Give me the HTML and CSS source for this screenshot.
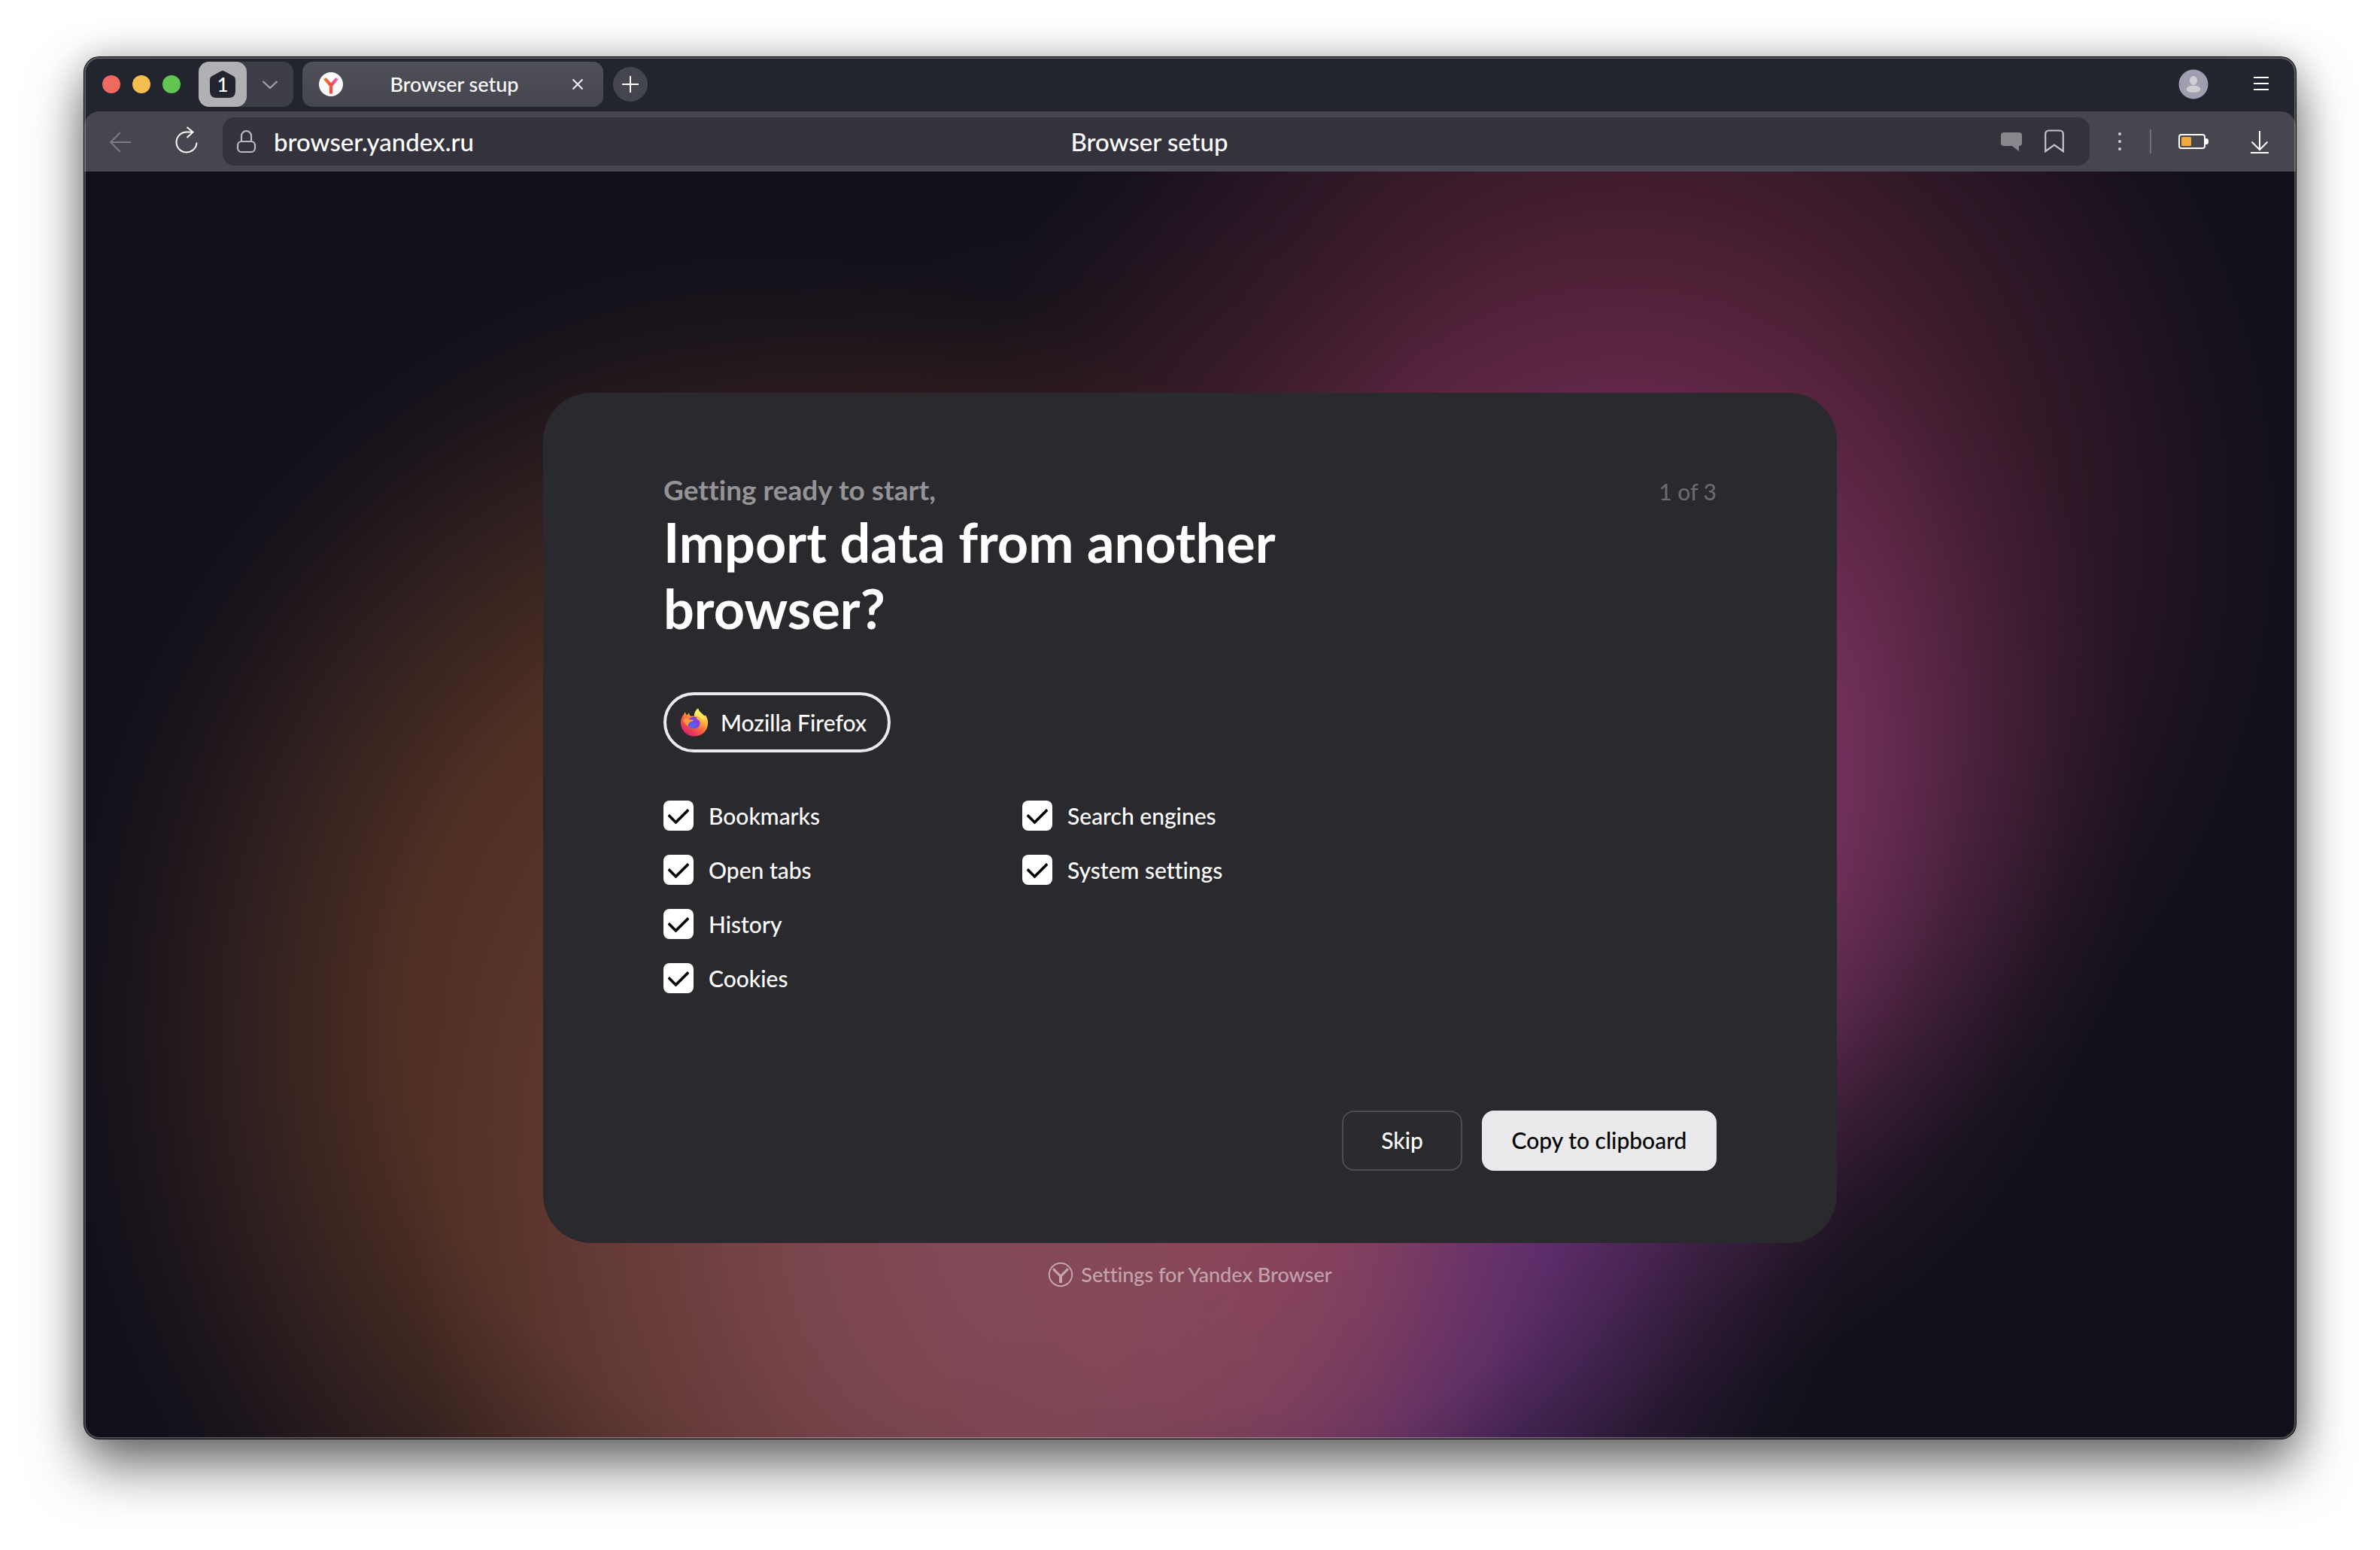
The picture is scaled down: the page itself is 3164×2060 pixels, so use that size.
FILE: index.html
```html
<!DOCTYPE html>
<html lang="en">
<head>
<meta charset="utf-8">
<title>Browser setup</title>
<link rel="stylesheet" href="styles.css">
</head>
<body>
<div class="window">
  <header class="tabbar">
    <div class="lights">
      <button class="light light-close" aria-label="Close window"></button>
      <button class="light light-min" aria-label="Minimize window"></button>
      <button class="light light-max" aria-label="Maximize window"></button>
    </div>
    <div class="group">
      <button class="group-count" aria-label="Tab group">
        <svg class="group-shape" viewBox="0 0 34 36" aria-hidden="true"><path d="M14.500 .8 Q17 -.6 19.500 .8 L31 7 Q34 8.600 34 12 V27 Q34 36 25 36 H9 Q0 36 0 27 V12 Q0 8.600 3 7 Z" fill="#22242e"/></svg>
        <span class="group-number">1</span>
      </button>
      <button class="group-menu" aria-label="Tab group menu">
        <svg width="24" height="24" viewBox="0 0 24 24" aria-hidden="true"><path d="M2.500 8 L12 17 L21.500 8" fill="none" stroke="#a3a3a8" stroke-width="2.200"/></svg>
      </button>
    </div>
    <div class="tab">
      <svg width="32" height="32" viewBox="0 0 32 32" aria-hidden="true">
        <defs>
          <linearGradient id="ya" x1="0" y1="0" x2="1" y2="0"><stop offset="0" stop-color="#f08a2c"/><stop offset=".5" stop-color="#ee4b3a"/><stop offset=".75" stop-color="#e8569c"/><stop offset="1" stop-color="#f07ae0"/></linearGradient>
        </defs>
        <circle cx="16" cy="16" r="16" fill="#fff"/>
        <path d="M6 9.500 L9.500 7 L16 14.200 L22.500 7 L26 9.500 L18.200 18.500 V28.500 H13.800 V18.500 Z" fill="url(#ya)"/>
      </svg>
      <span class="tab-title">Browser setup</span>
      <button class="icon-btn tab-close" aria-label="Close tab">
        <svg width="32" height="32" viewBox="0 0 32 32" aria-hidden="true"><path d="M9.500 9.500 L22.500 22.500 M22.500 9.500 L9.500 22.500" stroke="#f0f0f2" stroke-width="2"/></svg>
      </button>
    </div>
    <button class="new-tab" aria-label="New tab">
      <svg width="24" height="24" viewBox="0 0 24 24" aria-hidden="true"><path d="M12 1 V23 M1 12 H23" stroke="#fff" stroke-width="2"/></svg>
    </button>
    <div class="tabbar-end">
      <button class="icon-btn" aria-label="Profile">
        <svg width="40" height="40" viewBox="0 0 40 40" aria-hidden="true"><circle cx="20" cy="20" r="19.500" fill="#a09fb1"/><ellipse cx="20" cy="15" rx="5" ry="6" fill="#cfcfd1"/><path d="M20 21.800c6 0 9.300 2.200 9.300 5 0 2.600-3 4-9.300 4s-9.300-1.400-9.300-4c0-2.800 3.300-5 9.300-5z" fill="#cfcfd1"/></svg>
      </button>
      <button class="icon-btn" aria-label="Menu">
        <svg width="40" height="40" viewBox="0 0 40 40" aria-hidden="true"><path d="M10 11 H30 M10 19 H30 M10 27 H30" stroke="#fff" stroke-width="2"/></svg>
      </button>
    </div>
  </header>

  <nav class="toolbar">
    <button class="icon-btn" aria-label="Back" disabled>
      <svg width="40" height="40" viewBox="0 0 40 40" aria-hidden="true"><path d="M34 21 H7 M20 8 L7 21 L20 34" fill="none" stroke="#7c7c82" stroke-width="2"/></svg>
    </button>
    <button class="icon-btn reload" aria-label="Reload">
      <svg width="40" height="40" viewBox="0 0 40 40" aria-hidden="true"><path d="M33.500 21.500 A13.500 13.500 0 1 1 20 7.500 H28 M20.500 1 L28.500 7.500 L20.500 15" fill="none" stroke="#fff" stroke-width="2"/></svg>
    </button>
    <div class="address">
      <div class="address-start">
        <svg width="32" height="32" viewBox="0 0 32 32" aria-hidden="true"><rect x="4" y="16" width="23" height="14" rx="5" fill="none" stroke="#babac0" stroke-width="2.200"/><path d="M9 16 V8.500 a6.500 6.500 0 0 1 13 0 V16" fill="none" stroke="#babac0" stroke-width="2.200"/></svg>
        <input class="url" type="text" value="browser.yandex.ru" aria-label="Address">
      </div>
      <span class="page-title">Browser setup</span>
      <div class="address-end">
        <button class="icon-btn" aria-label="Feedback">
          <svg width="28" height="32" viewBox="0 0 28 32" aria-hidden="true"><path d="M4 4 H24 a4 4 0 0 1 4 4 V18 a4 4 0 0 1 -4 4 V29 L15 22 H4 a4 4 0 0 1 -4 -4 V8 a4 4 0 0 1 4 -4z" fill="#87878c"/></svg>
        </button>
        <button class="icon-btn" aria-label="Bookmark">
          <svg width="26" height="32" viewBox="0 0 26 32" aria-hidden="true"><path d="M1.200 29 V6 a4.500 4.500 0 0 1 4.500 -4.500 H20.300 a4.500 4.500 0 0 1 4.500 4.500 V29 L13 20.500 Z" fill="none" stroke="#c4c4c8" stroke-width="2.200"/></svg>
        </button>
      </div>
    </div>
    <button class="icon-btn more" aria-label="More">
      <svg width="40" height="40" viewBox="0 0 40 40" aria-hidden="true"><g fill="#cfcfd3"><circle cx="20" cy="10" r="2"/><circle cx="20" cy="20" r="2"/><circle cx="20" cy="30" r="2"/></g></svg>
    </button>
    <span class="divider"></span>
    <button class="icon-btn battery" aria-label="Battery">
      <svg width="40" height="40" viewBox="0 0 40 40" aria-hidden="true"><rect x="1" y="11" width="34" height="18" rx="3" fill="none" stroke="#fff" stroke-width="2"/><rect x="4" y="14" width="13" height="12" rx="1.500" fill="#f3a93c"/><path d="M35 16 h2.500 q2.500 0 2.500 4 t-2.500 4 H35z" fill="#fff"/></svg>
    </button>
    <button class="icon-btn download" aria-label="Downloads">
      <svg width="40" height="40" viewBox="0 0 40 40" aria-hidden="true"><path d="M20 6 V31 M9.500 20.500 L20 31 L30.500 20.500 M8 35 H32" fill="none" stroke="#fff" stroke-width="2"/></svg>
    </button>
  </nav>

  <main class="page">
    <form class="card">
      <div class="card-head">
        <h1 class="headline"><span class="kicker">Getting ready to start,</span>Import data from another browser?</h1>
        <span class="step">1 of 3</span>
      </div>
      <button class="source" type="button">
        <svg width="38" height="38" viewBox="0 0 40 40" aria-hidden="true">
          <defs>
            <linearGradient id="fx" x1=".85" y1=".1" x2=".25" y2=".95"><stop offset="0" stop-color="#fff36a"/><stop offset=".3" stop-color="#ffb43c"/><stop offset=".6" stop-color="#fb6240"/><stop offset="1" stop-color="#d8216f"/></linearGradient>
            <linearGradient id="fy" x1=".5" y1="0" x2=".5" y2="1"><stop offset="0" stop-color="#fff56b"/><stop offset=".5" stop-color="#ffe05a"/><stop offset="1" stop-color="#ffa436" stop-opacity="0"/></linearGradient>
            <radialGradient id="fp" cx=".35" cy=".75" r=".9"><stop offset="0" stop-color="#4d6cf0"/><stop offset=".6" stop-color="#7b3fe0"/><stop offset="1" stop-color="#a53bd8"/></radialGradient>
          </defs>
          <path d="M25.500 .5 C26 4.500 29.500 6.500 32.500 9.500 C34 11.500 35.500 11 35.500 9.500 C38.500 14 39.500 18 39 22.500 C38 32.500 30 39.500 20 39.500 C9 39.500 1 31 1 20.500 C1 15.500 3 11 6 8 L6.800 5.500 C7.800 6.500 8.500 8.200 9 10 C10 9.500 11.200 8.800 12.500 6.500 C12.800 8.500 13.500 10 15 11.200 L20 11 C20 7 22 2.500 25.500 .5z" fill="url(#fx)"/>
          <circle cx="19.500" cy="20.500" r="8.500" fill="url(#fp)"/>
          <path d="M25.500 .5 C26 4.500 29.500 6.500 32.500 9.500 C36 14 36.500 22 33 27 C34 20 31 15 27 12.500 C24 10.500 21.500 11 20 11 C20 7 22 2.500 25.500 .5z" fill="url(#fy)"/>
          <path d="M4.500 17 C7 12.500 11 14.500 13.500 16 C16 17 18.500 15.800 19 16.600 C19 18 16 18.800 14.500 19.500 C12.500 20.500 11.500 22 11 25 C8 23 5.500 21 4.500 17z" fill="#ff9d3a"/>
          <path d="M23 11.500 C27 12.500 30 17 29.500 22 C28.500 18.500 26 16 23.500 15.500z" fill="#ffb03a"/>
        </svg>
        <span>Mozilla Firefox</span>
      </button>
      <div class="options">
        <label class="option"><input class="check" type="checkbox" checked>Bookmarks</label>
        <label class="option"><input class="check" type="checkbox" checked>Open tabs</label>
        <label class="option"><input class="check" type="checkbox" checked>History</label>
        <label class="option"><input class="check" type="checkbox" checked>Cookies</label>
        <label class="option"><input class="check" type="checkbox" checked>Search engines</label>
        <label class="option"><input class="check" type="checkbox" checked>System settings</label>
      </div>
      <div class="actions">
        <button class="btn btn-outline" type="button">Skip</button>
        <button class="btn btn-solid" type="button">Copy to clipboard</button>
      </div>
    </form>
    <p class="brand">
      <svg width="34" height="34" viewBox="0 0 34 34" aria-hidden="true"><circle cx="17" cy="17" r="15.200" fill="none" stroke="currentColor" stroke-width="2"/><path d="M8 8 L17 17 L26 8 L28 10.500 L19 19.500 V28 H15 V19.500 L6 10.500 Z" fill="currentColor"/></svg>
      <span>Settings for Yandex Browser</span>
    </p>
  </main>
</div>
</body>
</html>
```

FILE: styles.css
```css
* {
  box-sizing: border-box;
}

body {
  margin: 0;
  min-height: 100vh;
  padding: 76px 112px 148px;
  display: flex;
  background: #fff;
  color: #fff;
  font-family: Lato, "Noto Sans", sans-serif;
  font-size: 30px;
  font-weight: 500;
  font-variant-ligatures: none;
  line-height: 40px;
}

button,
input {
  font: inherit;
  font-variant-ligatures: inherit;
  color: inherit;
  border: 0;
  padding: 0;
  background: none;
}

svg {
  display: block;
  flex: none;
}

.window {
  position: relative;
  flex: 1;
  display: flex;
  flex-direction: column;
  border-radius: 20px;
  background: #22252e;
  box-shadow: 0 0 0 1px #000, 0 36px 72px rgba(0, 0, 0, .56), 0 0 48px rgba(0, 0, 0, .22);
}

.window::after {
  content: "";
  position: absolute;
  inset: 0;
  border: 2px solid rgba(255, 255, 255, .26);
  border-radius: 20px;
  pointer-events: none;
}

/* Tab bar */
.tabbar {
  display: flex;
  align-items: center;
  height: 72px;
  padding: 0 26px 0 24px;
}

.lights {
  display: flex;
  gap: 16px;
}

.light {
  width: 24px;
  height: 24px;
  border-radius: 50%;
}

.light-close { background: #ee6a5f; }
.light-min { background: #f5bf4f; }
.light-max { background: #61c554; }

.group {
  display: flex;
  width: 126px;
  height: 60px;
  margin-left: 24px;
  border-radius: 14px;
  background: #3e3e48;
}

.group-count {
  display: grid;
  place-items: center;
  width: 64px;
  border-radius: 14px;
  background: #b0b0b5;
}

.group-shape,
.group-number {
  grid-area: 1 / 1;
}

.group-shape {
  width: 34px;
  height: 36px;
}

.group-number {
  font-size: 26px;
}

.group-menu {
  flex: 1;
  display: grid;
  place-items: center;
}

.tab {
  display: flex;
  align-items: center;
  width: 400px;
  height: 60px;
  margin-left: 12px;
  padding: 0 18px 0 22px;
  border-radius: 14px;
  background: linear-gradient(#50505a, #45454e);
}

.tab-title {
  flex: 1;
  text-align: center;
  font-size: 27px;
}

.new-tab {
  display: grid;
  place-items: center;
  width: 46px;
  height: 46px;
  margin-left: 13px;
  border-radius: 50%;
  background: #45454e;
}

.tabbar-end {
  display: flex;
  gap: 50px;
  margin-left: auto;
}

/* Toolbar */
.toolbar {
  display: flex;
  align-items: center;
  height: 80px;
  padding: 0 28px;
  border-radius: 20px 20px 0 0;
  background: #47464f;
}

.reload {
  margin-left: 48px;
}

.address {
  flex: 1;
  display: grid;
  grid-template-columns: 1fr auto 1fr;
  align-items: center;
  height: 64px;
  margin: 0 20px 0 28px;
  padding: 0 34px 0 16px;
  border-radius: 16px;
  background: #34333d;
  font-size: 33px;
}

.address-start {
  display: flex;
  align-items: center;
  gap: 20px;
}

.url {
  flex: 1;
  min-width: 0;
}

.address-end {
  display: flex;
  justify-content: flex-end;
  gap: 30px;
}

.divider {
  width: 2px;
  height: 32px;
  margin: 0 36px 0 20px;
  background: #6f6f76;
}

.download {
  margin-left: 48px;
}

/* Page */
.page {
  flex: 1;
  display: flex;
  flex-direction: column;
  align-items: center;
  padding: 294px 24px 64px;
  border-radius: 0 0 20px 20px;
  background:
    radial-gradient(25% 54% at 40% 84%, rgba(134, 76, 90, .85), rgba(134, 76, 90, .75) 30%, rgba(134, 76, 90, .38) 60%, rgba(134, 76, 90, .1) 85%, transparent),
    radial-gradient(17% 34% at 50% 82%, rgba(146, 66, 84, .9), rgba(146, 66, 84, .6) 45%, rgba(146, 66, 84, .15) 80%, transparent),
    radial-gradient(23% 42% at 57% 82%, rgba(104, 50, 122, .95), rgba(104, 50, 122, .8) 40%, rgba(104, 50, 122, .25) 72%, rgba(104, 50, 122, .05) 90%, transparent),
    radial-gradient(24% 48% at 69% 50%, rgba(128, 54, 106, .9), rgba(128, 54, 106, .8) 40%, rgba(128, 54, 106, .3) 68%, rgba(128, 54, 106, .08) 86%, transparent),
    radial-gradient(30% 56% at 70% 28%, rgba(96, 36, 62, .95), rgba(92, 36, 58, .75) 40%, rgba(92, 36, 58, .35) 70%, rgba(92, 36, 58, .1) 88%, transparent),
    radial-gradient(22% 34% at 46% 36%, rgba(80, 40, 30, .5), rgba(80, 40, 30, .25) 50%, rgba(80, 40, 30, .06) 80%, transparent),
    radial-gradient(32% 62% at 31% 68%, rgba(92, 54, 38, 1), rgba(92, 54, 38, .85) 50%, rgba(92, 54, 38, .3) 80%, rgba(92, 54, 38, .1) 91%, transparent),
    #12101a;
}

.card {
  display: flex;
  flex-direction: column;
  align-items: flex-start;
  width: 100%;
  max-width: 1720px;
  min-height: 1130px;
  padding: 104px 160px 96px;
  border-radius: 64px;
  background: #2a292e;
}

.card-head {
  display: flex;
  justify-content: space-between;
  align-items: baseline;
  width: 100%;
}

.headline {
  margin: 0;
  max-width: 900px;
  font-size: 72px;
  line-height: 88px;
  font-weight: 700;
}

.kicker {
  display: block;
  font-size: 37px;
  line-height: 50px;
  color: #949497;
}

.step {
  color: #6a696d;
}

.source {
  display: flex;
  align-items: center;
  gap: 16px;
  height: 80px;
  margin-top: 68px;
  padding: 0 28px 0 18px;
  border: 4px solid #ebebed;
  border-radius: 40px;
}

.options {
  display: grid;
  grid-auto-flow: column;
  grid-template-rows: repeat(4, 40px);
  grid-auto-columns: 477px;
  row-gap: 32px;
  margin: 64px 0;
}

.option {
  display: flex;
  align-items: center;
  gap: 20px;
}

.check {
  appearance: none;
  display: grid;
  place-items: center;
  width: 40px;
  height: 40px;
  margin: 0;
  border-radius: 8px;
  background: #fff;
}

.check:checked::before {
  content: "";
  width: 22px;
  height: 12px;
  margin-top: -6px;
  border: solid #000;
  border-width: 0 0 4px 4px;
  border-radius: 2px;
  transform: rotate(-45deg);
}

.actions {
  display: flex;
  gap: 26px;
  margin-top: auto;
  align-self: flex-end;
}

.btn {
  height: 80px;
  padding-bottom: 2px;
  border-radius: 16px;
}

.btn-outline {
  width: 160px;
  border: 2px solid #4d4c51;
}

.btn-solid {
  width: 312px;
  background: #eae9ec;
  color: #000;
}

.brand {
  display: flex;
  align-items: center;
  gap: 10px;
  margin: 22px 0 0;
  font-size: 27px;
  color: rgba(255, 255, 255, .5);
}
```
